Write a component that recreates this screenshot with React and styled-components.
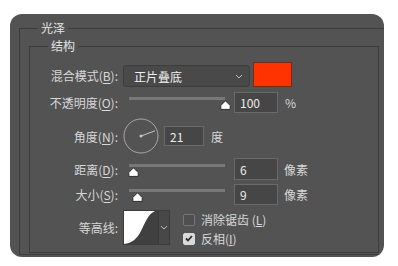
import React from 'react';
import styled, { createGlobalStyle } from 'styled-components';

const GlobalStyle = createGlobalStyle`
  body {
    margin: 0;
    background: #ffffff;
    font-family: "Noto Sans CJK SC", "Microsoft YaHei", sans-serif;
  }
`;

const Page = styled.div`
  padding: 14px 14px 0 10px;
`;

const Panel = styled.div`
  box-sizing: border-box;
  height: 243px;
  background-color: #535353;
  border-radius: 12px;
  overflow: hidden;
  padding: 6px 0 0 9px;
  display: flex;
  flex-direction: column;
`;

const Group = styled.fieldset`
  margin: 0 ${(p) => (p.$outer ? '-2px' : '0')} ${(p) => (p.$outer ? '2px' : '0')} 0;
  padding: ${(p) => (p.$outer ? '2px 6px 1px 9px' : '8px 0 0 0')};
  border: 1px solid #3c3c3c;
  box-shadow: ${(p) => (p.$outer ? 'none' : 'none')};
  flex: 1;
  display: flex;
  flex-direction: column;
  min-width: 0;
`;

const Legend = styled.legend`
  margin-left: ${(p) => p.$offset}px;
  padding: 0 3px;
  font-size: 12px;
  line-height: 16px;
  color: #e4e4e4;
`;

const Row = styled.div`
  display: flex;
  align-items: ${(p) => p.$align || 'center'};
  height: ${(p) => p.$h}px;
  margin-top: ${(p) => p.$mt}px;
`;

const Label = styled.div`
  width: 88px;
  flex-shrink: 0;
  margin-right: 5px;
  text-align: right;
  font-size: 12px;
  color: #d8d8d8;
  align-self: ${(p) => (p.$top ? 'flex-start' : 'center')};
  margin-top: ${(p) => p.$top || 0}px;

  u {
    text-underline-offset: 2px;
  }
`;

const Select = styled.div`
  box-sizing: border-box;
  width: 127px;
  height: 22px;
  background-color: #494949;
  border: 1px solid #3d3d3d;
  border-radius: 3px;
  padding: 0 6px 0 10px;
  display: flex;
  align-items: center;
  justify-content: space-between;
  font-size: 12px;
  color: #f0f0f0;
`;

const Swatch = styled.div`
  box-sizing: border-box;
  width: 39px;
  height: 25px;
  margin-left: 3px;
  background-color: #ff3300;
  border: 1px solid #7a2a14;
`;

const SliderBox = styled.div`
  position: relative;
  width: 106px;
  height: 100%;
  flex-shrink: 0;
`;

const Track = styled.div`
  position: absolute;
  top: ${(p) => p.$top}px;
  left: 6px;
  width: 96px;
  height: 3px;
  background-color: #787878;
`;

const Thumb = styled.svg`
  position: absolute;
  top: ${(p) => p.$top}px;
  left: ${(p) => p.$left}px;
`;

const NumberBox = styled.div`
  box-sizing: border-box;
  width: ${(p) => p.$w || 44}px;
  height: ${(p) => p.$h || 21}px;
  margin-left: 5px;
  padding-left: 5px;
  background-color: #464646;
  border: 1px solid #6a6a6a;
  display: flex;
  align-items: center;
  font-size: 12px;
  color: #ececec;
`;

const Unit = styled.span`
  margin-left: ${(p) => p.$ml}px;
  font-size: 12px;
  color: #d8d8d8;
`;

const Contour = styled.div`
  box-sizing: border-box;
  display: flex;
  width: 47px;
  height: 35px;
  border: 1px solid #3c3c3c;
  background-color: #404040;
`;

const ContourArrow = styled.div`
  flex: 1;
  display: flex;
  align-items: center;
  justify-content: center;
  background-color: #484848;
  border-left: 1px solid #3a3a3a;
`;

const Checks = styled.div`
  display: flex;
  flex-direction: column;
  gap: 6px;
  margin-left: 13px;
  align-self: flex-start;
  padding-top: 3px;
`;

const CheckItem = styled.div`
  display: flex;
  align-items: center;
  height: 13px;
  font-size: 12px;
  color: #d8d8d8;
`;

const Box = styled.div`
  box-sizing: border-box;
  width: 12px;
  height: 12px;
  margin-right: 6px;
  border-radius: 2px;
  display: flex;
  align-items: center;
  justify-content: center;
  background-color: ${(p) => (p.$on ? '#d9d9d9' : '#4f4f4f')};
  border: 1px solid ${(p) => (p.$on ? '#d9d9d9' : '#767676')};
`;

const Chevron = () => (
  <svg width="8" height="5" viewBox="0 0 8 5">
    <path d="M1 1 L4 4 L7 1" fill="none" stroke="#bdbdbd" strokeWidth="1" />
  </svg>
);

const Slider = ({ thumb, trackTop = 5, thumbTop = 8 }) => (
  <SliderBox>
    <Track $top={trackTop} />
    <Thumb $top={thumbTop} $left={thumb} width="11" height="10" viewBox="0 0 11 10">
      <path d="M5.5 0.8 L10.2 5.5 V9.4 H0.8 V5.5 Z" fill="#ffffff" stroke="#2a2a2a" strokeWidth="1" strokeLinejoin="round" />
    </Thumb>
  </SliderBox>
);

const AngleDial = () => (
  <svg width="36" height="36" viewBox="0 0 36 36">
    <circle cx="18" cy="18" r="17" fill="none" stroke="#a8a8a8" strokeWidth="1" />
    <line x1="18" y1="18" x2="32" y2="12.8" stroke="#c8c8c8" strokeWidth="1" />
    <circle cx="18" cy="18" r="1.5" fill="#c8c8c8" />
  </svg>
);

const App = () => {
  return (
    <Page>
      <GlobalStyle />
      <Panel>
        <Group $outer>
          <Legend $offset={9}>光泽</Legend>
          <Group>
            <Legend $offset={18}>结构</Legend>

            <Row $h={25} $mt={0} $align="flex-end">
              <Label $top={5}>混合模式(<u>B</u>):</Label>
              <Select>
                正片叠底
                <Chevron />
              </Select>
              <Swatch />
            </Row>

            <Row $h={21} $mt={5}>
              <Label>不透明度(<u>O</u>):</Label>
              <Slider thumb={97} />
              <NumberBox>100</NumberBox>
              <Unit $ml={7}>%</Unit>
            </Row>

            <Row $h={36} $mt={5}>
              <Label>角度(<u>N</u>):</Label>
              <AngleDial />
              <NumberBox $w={40} $h={20}>21</NumberBox>
              <Unit $ml={7}>度</Unit>
            </Row>

            <Row $h={22} $mt={4}>
              <Label>距离(<u>D</u>):</Label>
              <Slider thumb={5} trackTop={6} thumbTop={9} />
              <NumberBox $h={22}>6</NumberBox>
              <Unit $ml={6}>像素</Unit>
            </Row>

            <Row $h={21} $mt={4}>
              <Label>大小(<u>S</u>):</Label>
              <Slider thumb={9} trackTop={5} thumbTop={8} />
              <NumberBox>9</NumberBox>
              <Unit $ml={6}>像素</Unit>
            </Row>

            <Row $h={35} $mt={5}>
              <Label>等高线:</Label>
              <Contour>
                <svg width="34" height="33" viewBox="0 0 34 33">
                  <path d="M0 0 H31 C24 3 21 12 17 20 C13 28 8 32 0 33 Z" fill="#ffffff" />
                </svg>
                <ContourArrow>
                  <Chevron />
                </ContourArrow>
              </Contour>
              <Checks>
                <CheckItem>
                  <Box />
                  消除锯齿 (<u>L</u>)
                </CheckItem>
                <CheckItem>
                  <Box $on>
                    <svg width="8" height="7" viewBox="0 0 8 7">
                      <path d="M1 3.5 L3 5.5 L7 1" fill="none" stroke="#2e2e2e" strokeWidth="1.8" />
                    </svg>
                  </Box>
                  反相(<u>I</u>)
                </CheckItem>
              </Checks>
            </Row>
          </Group>
        </Group>
      </Panel>
    </Page>
  );
};

export default App;
